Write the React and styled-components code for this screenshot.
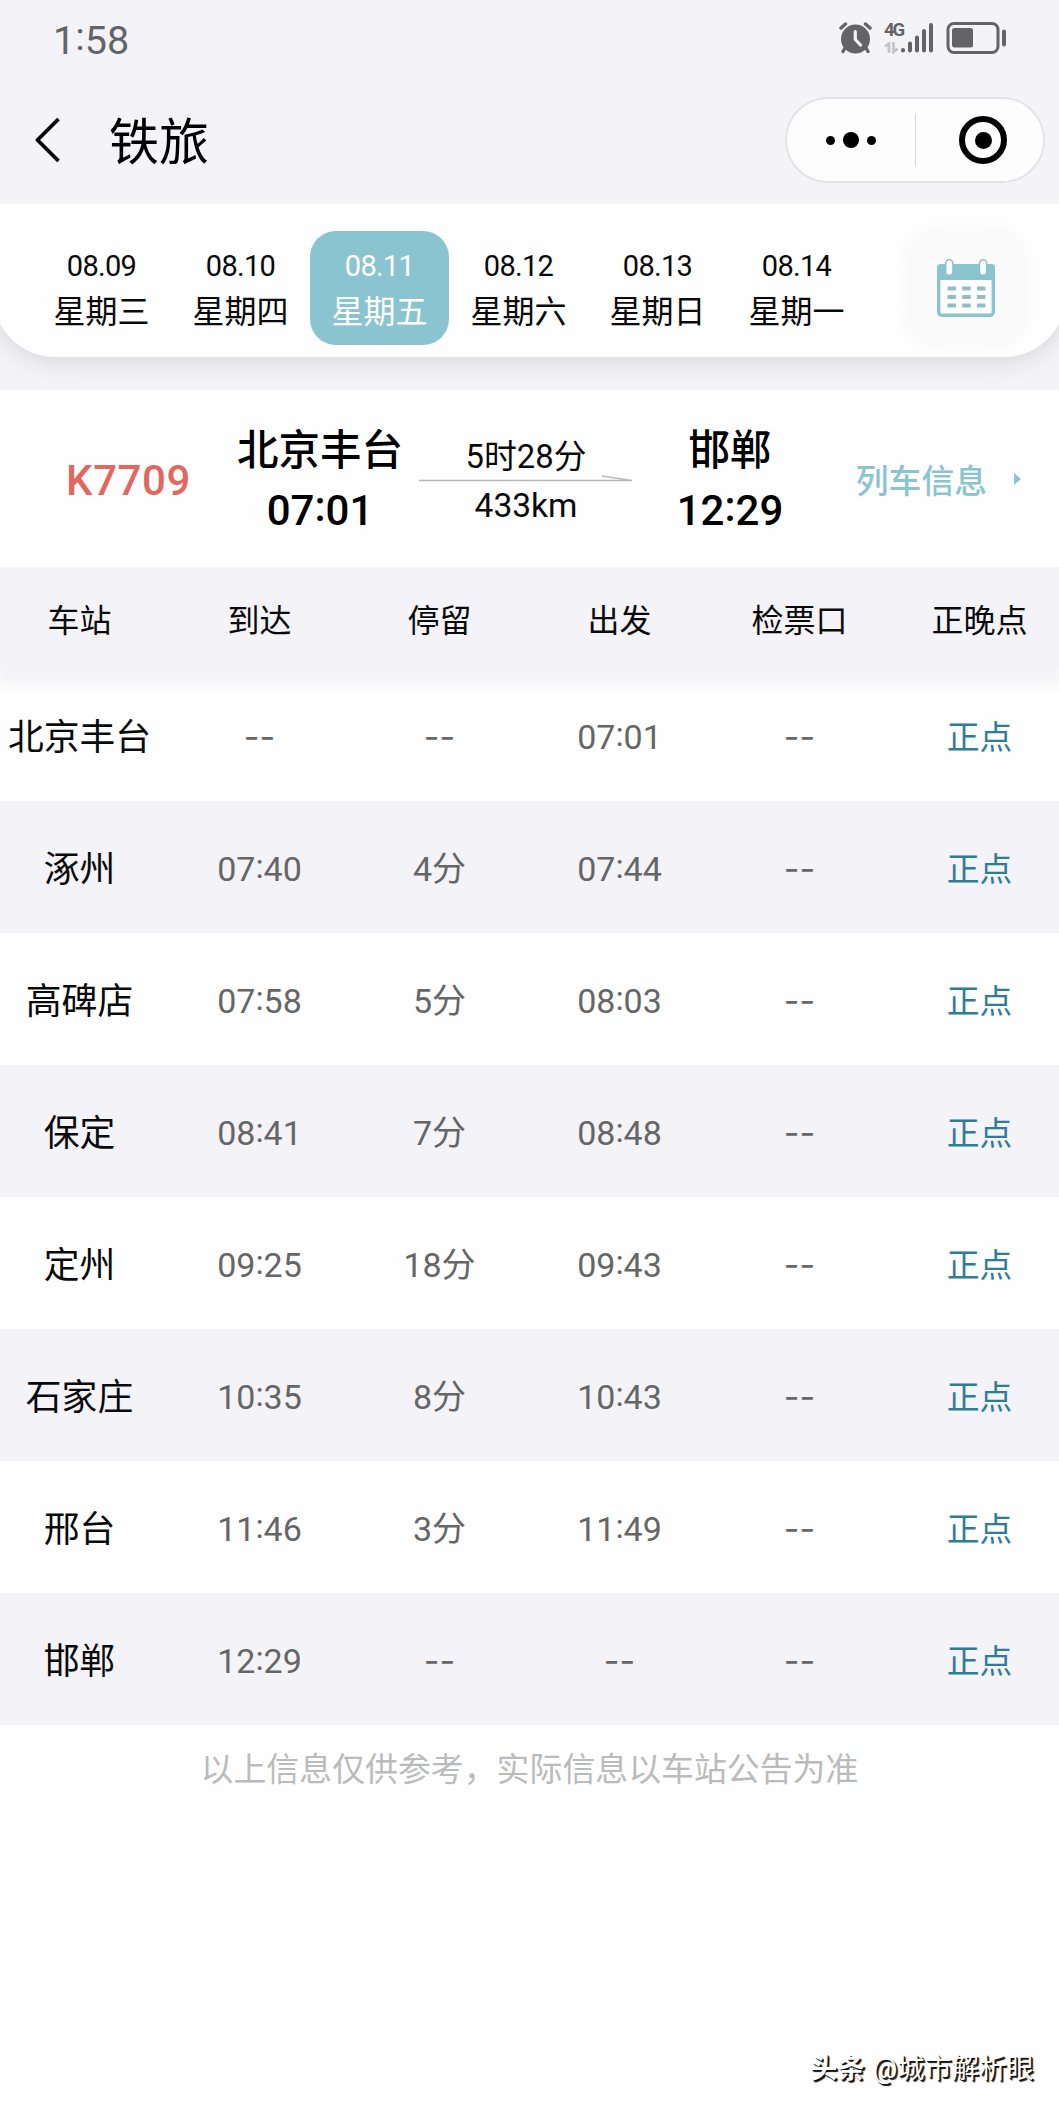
import { Fragment } from "react"
import styled, { createGlobalStyle } from "styled-components"

const days = [
  { date: "08.09", week: "星期三" },
  { date: "08.10", week: "星期四" },
  { date: "08.11", week: "星期五" },
  { date: "08.12", week: "星期六" },
  { date: "08.13", week: "星期日" },
  { date: "08.14", week: "星期一" },
]

const columns = ["车站", "到达", "停留", "出发", "检票口", "正晚点"]

const stops = [
  { name: "北京丰台", arrive: "--", stay: "--", leave: "07:01" },
  { name: "涿州", arrive: "07:40", stay: "4分", leave: "07:44" },
  { name: "高碑店", arrive: "07:58", stay: "5分", leave: "08:03" },
  { name: "保定", arrive: "08:41", stay: "7分", leave: "08:48" },
  { name: "定州", arrive: "09:25", stay: "18分", leave: "09:43" },
  { name: "石家庄", arrive: "10:35", stay: "8分", leave: "10:43" },
  { name: "邢台", arrive: "11:46", stay: "3分", leave: "11:49" },
  { name: "邯郸", arrive: "12:29", stay: "--", leave: "--" },
]

// times are set with a slightly raised colon
function Time({ value }) {
  return value.split(":").map((part, i) => (
    <Fragment key={i}>
      {i > 0 && <Colon>:</Colon>}
      {part}
    </Fragment>
  ))
}

function StopCell({ value }) {
  return (
    <Cell>{value === "--" ? <Dashes>--</Dashes> : <Time value={value} />}</Cell>
  )
}

function AlarmIcon() {
  return (
    <svg width="34" height="32" viewBox="0 0 34 32" fill="none">
      <circle cx="17.500" cy="17" r="14.500" fill="#646466" />
      <path d="M3 6L7.500 2M32 6L27.500 2" stroke="#646466" strokeWidth="3.400" strokeLinecap="round" />
      <path d="M7 26L5 29.500M28 26L30 29.500" stroke="#646466" strokeWidth="3.400" strokeLinecap="round" />
      <path d="M17.300 9.500V17.500L22.500 23" stroke="#f4f3f8" strokeWidth="3.200" strokeLinecap="round" strokeLinejoin="round" />
    </svg>
  )
}

function SignalIcon() {
  return (
    <svg width="34" height="32" viewBox="0 0 34 32" stroke="#646466" strokeWidth="4" strokeLinecap="round">
      <path d="M3 28V28.500M10 21.500V28.500M17 15.500V28.500M24 9V28.500M31 3V28.500" />
    </svg>
  )
}

function DataArrows() {
  return (
    <svg width="14" height="12" viewBox="0 0 14 12" stroke="#c4c4c8" strokeWidth="2.800" fill="none">
      <path d="M1 4.500L5 1.500V11M9.500 0V10L13.500 6.500" />
    </svg>
  )
}

function BatteryIcon() {
  return (
    <svg width="60" height="32" viewBox="0 0 60 32">
      <rect x="2" y="1.500" width="50" height="29" rx="6" fill="none" stroke="#646466" strokeWidth="3" />
      <rect x="6" y="6" width="21" height="19.500" rx="2.500" fill="#646466" />
      <rect x="56" y="7.500" width="4" height="17" rx="2" fill="#646466" />
    </svg>
  )
}

function CalendarIcon() {
  return (
    <svg width="58" height="58" viewBox="0 0 58 58">
      <rect x="1.700" y="7" width="54.600" height="49.300" rx="3" fill="#fff" stroke="#8ac4cf" strokeWidth="3.400" />
      <path d="M0 21V8.500Q0 5 3.500 5H54.500Q58 5 58 8.500V21Z" fill="#8ac4cf" />
      <rect x="8.700" y="0.700" width="7.200" height="15.600" rx="3.600" fill="#f4fdff" stroke="#8ebdc6" strokeWidth="1.400" />
      <rect x="42.500" y="0.700" width="7.200" height="15.600" rx="3.600" fill="#f4fdff" stroke="#8ebdc6" strokeWidth="1.400" />
      <path d="M10.500 29.500H49M10.500 38H49M10.500 46.500H49" stroke="#93bdc4" strokeWidth="4.200" strokeDasharray="8.500 6.200" />
    </svg>
  )
}

export default function App() {
  return (
    <Page>
      <GlobalStyle />
      <StatusBar>
        <Clock><Time value="1:58" /></Clock>
        <StatusIcons>
          <AlarmIcon />
          <Network>
            <NetworkType>
              4G
              <DataArrows />
            </NetworkType>
            <SignalIcon />
          </Network>
          <BatteryIcon />
        </StatusIcons>
      </StatusBar>

      <TitleBar>
        <svg width="26" height="48" viewBox="0 0 26 48" fill="none">
          <path d="M23.500 3L2.500 24L23.500 45" stroke="#000" strokeWidth="3.800" strokeLinejoin="round" />
        </svg>
        <Title>铁旅</Title>
        <Capsule>
          <MoreButton>
            <Dot $size={9} />
            <Dot $size={16} />
            <Dot $size={9} />
          </MoreButton>
          <CapsuleLine />
          <CloseButton>
            <Ring><Dot $size={17} /></Ring>
          </CloseButton>
        </Capsule>
      </TitleBar>

      <DateArea>
        <DatePanel>
          {days.map((day) => (
            <Day key={day.date} $active={day.date === "08.11"}>
              <DayDate>{day.date}</DayDate>
              <DayWeek>{day.week}</DayWeek>
            </Day>
          ))}
          <CalendarButton><CalendarIcon /></CalendarButton>
        </DatePanel>
      </DateArea>

      <Train>
        <TrainNo>K7709</TrainNo>
        <Terminal>
          <StationName>北京丰台</StationName>
          <StationTime><Time value="07:01" /></StationTime>
        </Terminal>
        <Journey>
          <Duration>5时28分</Duration>
          <svg width="214" height="7" viewBox="0 0 214 7" fill="none" stroke="#b9b9b9" strokeWidth="1.500">
            <path d="M0 5.500H213L183 1" />
          </svg>
          <Distance>433km</Distance>
        </Journey>
        <Terminal>
          <StationName>邯郸</StationName>
          <StationTime><Time value="12:29" /></StationTime>
        </Terminal>
        <InfoLink>
          列车信息
          <svg width="7" height="12" viewBox="0 0 7 12"><path d="M0 0L7 6L0 12Z" fill="#8ac4cf" /></svg>
        </InfoLink>
      </Train>

      <TableHead>
        {columns.map((name) => <HeadCell key={name}>{name}</HeadCell>)}
      </TableHead>
      {stops.map((stop, i) => (
        <Row key={stop.name} $shaded={i % 2 === 1}>
          <StopName>{stop.name}</StopName>
          <StopCell value={stop.arrive} />
          <StopCell value={stop.stay} />
          <StopCell value={stop.leave} />
          <StopCell value="--" />
          <Punctual>正点</Punctual>
        </Row>
      ))}

      <Notice>以上信息仅供参考，实际信息以车站公告为准</Notice>
      <Watermark>
        <b>头条</b> @城市解析眼
      </Watermark>
    </Page>
  )
}

const GlobalStyle = createGlobalStyle`
  body {
    margin: 0;
    background: #fff;
  }
  svg {
    display: block;
    flex-shrink: 0;
  }
`

const Page = styled.div`
  display: flex;
  flex-direction: column;
  width: 1059px;
  height: 2106px;
  overflow: hidden;
  background: #fefefe;
  color: #0a0a0a;
  font-family: Roboto, "Noto Sans CJK SC", sans-serif;
  white-space: nowrap;
`

const Colon = styled.span`
  line-height: 0;
  vertical-align: 0.09em;
`

const StatusBar = styled.header`
  display: flex;
  align-items: center;
  justify-content: space-between;
  height: 76px;
  padding: 0 53px 0 53px;
  background: #f4f3f8;
`

const Clock = styled.div`
  padding-top: 6px;
  font-size: 39.5px;
  line-height: 44px;
  color: #646466;
`

const StatusIcons = styled.div`
  display: flex;
  align-items: center;
  gap: 12px;
`

const Network = styled.div`
  display: flex;
  align-items: flex-end;
`

const NetworkType = styled.div`
  display: flex;
  flex-direction: column;
  gap: 4px;
  width: 16px;
  font-size: 18.5px;
  font-weight: 700;
  line-height: 16px;
  letter-spacing: -2px;
  color: #646466;
`

const TitleBar = styled.div`
  display: flex;
  align-items: center;
  height: 128px;
  padding: 0 14px 0 35px;
  background: #f4f3f8;
`

const Title = styled.h1`
  margin: 0 auto 0 48px;
  padding-top: 6px;
  font-size: 50px;
  font-weight: 400;
  line-height: 60px;
  color: #000;
`

const Capsule = styled.div`
  box-sizing: border-box;
  display: flex;
  align-items: center;
  width: 260px;
  height: 86px;
  border: 2px solid #e4e3e8;
  border-radius: 43px;
  background: #fdfdfe;
`

const CapsuleButton = styled.div`
  box-sizing: border-box;
  display: flex;
  align-items: center;
  justify-content: center;
  gap: 8px;
`

const MoreButton = styled(CapsuleButton)`
  width: 128px;
`

const CloseButton = styled(CapsuleButton)`
  width: 127px;
  padding-left: 7px;
`

const CapsuleLine = styled.div`
  width: 1px;
  height: 52px;
  background: #d8d8dc;
`

const Dot = styled.span`
  width: ${(props) => props.$size}px;
  height: ${(props) => props.$size}px;
  border-radius: 50%;
  background: #000;
`

const Ring = styled.span`
  box-sizing: border-box;
  display: flex;
  align-items: center;
  justify-content: center;
  width: 48px;
  height: 48px;
  border: 6px solid #000;
  border-radius: 50%;
`

const DateArea = styled.div`
  height: 186px;
  overflow: hidden;
  background: #f4f3f8;
`

// slightly wider than the screen, so the corners run off its edges
const DatePanel = styled.div`
  box-sizing: border-box;
  display: flex;
  height: 153px;
  margin: 0 -7px;
  padding: 27px 42px 0 39px;
  border-radius: 0 0 62px 62px;
  background: #fefefe;
  box-shadow: 0 4px 26px rgba(0, 0, 0, 0.12);
`

const Day = styled.div`
  box-sizing: border-box;
  display: flex;
  flex-direction: column;
  align-items: center;
  width: 139px;
  height: 114px;
  padding-top: 16px;
  border-radius: 26px;
  background: ${(props) => (props.$active ? "#89c4d0" : "transparent")};
  color: ${(props) => (props.$active ? "#fff" : "#0a0a0a")};
`

const DayDate = styled.div`
  font-size: 29px;
  line-height: 38px;
  letter-spacing: -0.7px;
`

const DayWeek = styled.div`
  padding-top: 5px;
  font-size: 32px;
  line-height: 44px;
`

const CalendarButton = styled.div`
  display: flex;
  align-items: center;
  justify-content: center;
  width: 116px;
  height: 114px;
  margin-left: auto;
  border-radius: 30px;
  background: #fafafa;
  box-shadow: 0 0 18px rgba(0, 0, 0, 0.04);
`

const Train = styled.section`
  display: grid;
  grid-template-columns: 177px 198px 214px 194px 1fr;
  align-items: center;
  justify-items: center;
  box-sizing: border-box;
  height: 177px;
  padding: 0 38px 0 44px;
`

const TrainNo = styled.div`
  justify-self: start;
  padding: 3px 0 0 22px;
  font-size: 42px;
  font-weight: 500;
  letter-spacing: 0.6px;
  color: #e1685f;
`

const Terminal = styled.div`
  display: flex;
  flex-direction: column;
  align-items: center;
  padding-top: 5px;
  font-weight: 500;
  color: #000;
`

const StationName = styled.div`
  font-size: 41.5px;
  line-height: 60px;
`

const StationTime = styled.div`
  font-size: 42px;
  line-height: 60px;
`

const Journey = styled.div`
  display: flex;
  flex-direction: column;
  align-items: center;
`

const Duration = styled.div`
  padding-top: 8px;
  font-size: 32.8px;
  line-height: 36px;
`

const Distance = styled.div`
  padding-top: 3px;
  font-size: 33.5px;
  line-height: 41px;
`

const InfoLink = styled.div`
  display: flex;
  align-items: center;
  justify-self: end;
  gap: 27px;
  font-size: 32.8px;
  font-weight: 500;
  color: #8ac4cf;
`

const TableLine = styled.div`
  display: grid;
  grid-template-columns: repeat(6, 180px);
  align-items: center;
  justify-content: center;
  justify-items: center;
`

const TableHead = styled(TableLine)`
  height: 102px;
  background: #f4f3f8;
  box-shadow: 0 12px 12px 4px #f4f3f8;
  clip-path: inset(0 0 -30px 0);
`

const HeadCell = styled.div`
  padding-top: 5px;
  font-size: 32px;
  line-height: 48px;
`

const Row = styled(TableLine)`
  height: 132px;
  background: ${(props) => (props.$shaded ? "#f4f3f8" : "transparent")};
`

const Cell = styled.div`
  padding-top: 4px;
  font-size: 34px;
  line-height: 48px;
  color: #666;
`

const Dashes = styled.span`
  font-family: Inter, sans-serif;
  line-height: 0;
`

const StopName = styled(Cell)`
  padding-top: 6px;
  font-size: 35.8px;
  color: #0a0a0a;
`

const Punctual = styled(Cell)`
  padding-top: 6px;
  font-size: 32.8px;
  color: #2f7d93;
`

const Notice = styled.p`
  margin: 21px 0 0;
  font-size: 32.9px;
  line-height: 48px;
  text-align: center;
  color: #bbb;
`

const Watermark = styled.footer`
  margin: auto 25px 17px auto;
  font-size: 27px;
  line-height: 40px;
  letter-spacing: 0.3px;
  word-spacing: 1px;
  color: #fff;
  text-shadow: 1px 1px 0 #111, 2px 2px 1px #111;
`
